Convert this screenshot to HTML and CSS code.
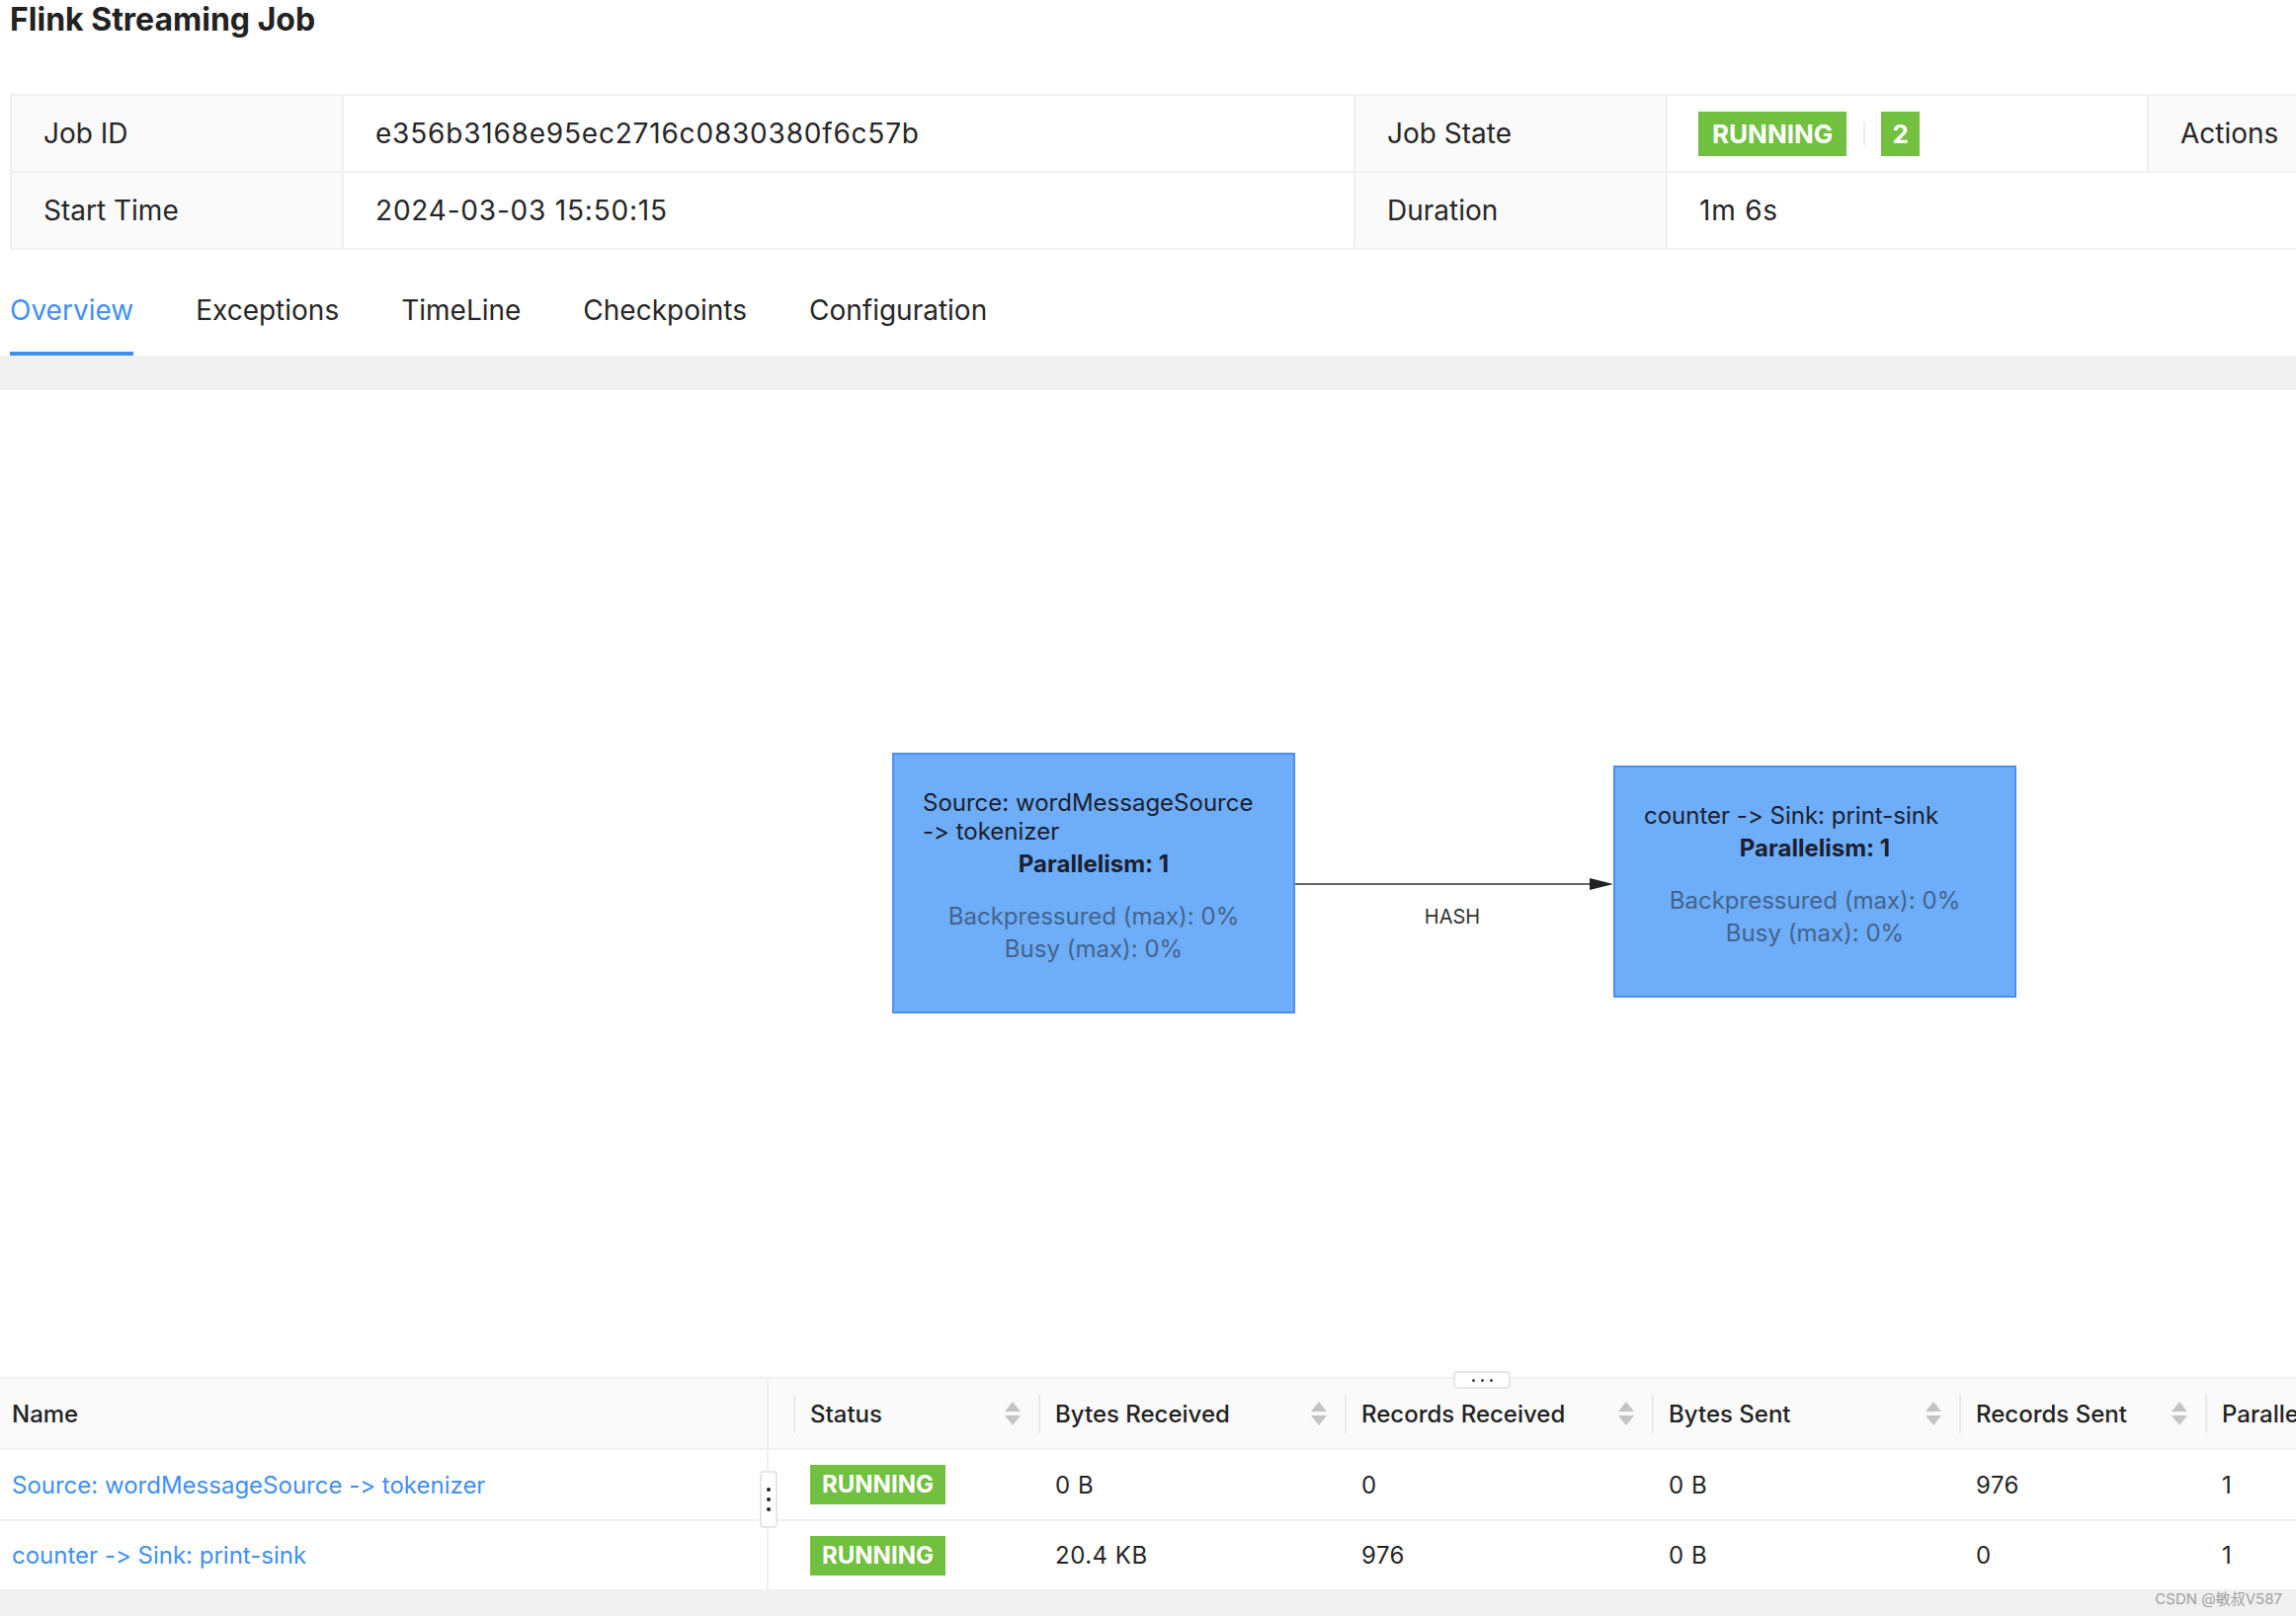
FILE: index.html
```html
<!DOCTYPE html>
<html lang="en">
<head>
<meta charset="utf-8">
<title>Flink Streaming Job</title>
<link rel="stylesheet" href="styles.css">
</head>
<body>
<div class="page">
  <h1 class="title">Flink Streaming Job</h1>

  <div class="desc">
    <div class="cell label">Job ID</div>
    <div class="cell value">e356b3168e95ec2716c0830380f6c57b</div>
    <div class="cell label">Job State</div>
    <div class="cell value state">
      <span class="tag tag-lg">RUNNING</span>
      <span class="vdiv"></span>
      <span class="tag tag-lg tag-num">2</span>
    </div>
    <div class="cell label">Actions</div>

    <div class="cell label">Start Time</div>
    <div class="cell value">2024-03-03 15:50:15</div>
    <div class="cell label">Duration</div>
    <div class="cell value span2">1m 6s</div>
  </div>

  <nav class="tabs">
    <span class="tab active">Overview</span>
    <span class="tab">Exceptions</span>
    <span class="tab">TimeLine</span>
    <span class="tab">Checkpoints</span>
    <span class="tab">Configuration</span>
  </nav>
  <div class="band"></div>

  <div class="graph">
    <svg class="edges" width="2324" height="999" viewBox="0 0 2324 999">
      <line x1="1311" y1="500" x2="1612" y2="500" stroke="#666" stroke-width="2"/>
      <path d="M1609 494 L1633 500 L1609 506 Z" fill="#222"/>
    </svg>
    <div class="node n1">
      <div class="node-name">Source: wordMessageSource -&gt; tokenizer</div>
      <div class="node-par">Parallelism: 1</div>
      <div class="node-metrics">
        <div>Backpressured (max): 0%</div>
        <div>Busy (max): 0%</div>
      </div>
    </div>
    <div class="node n2">
      <div class="node-name">counter -&gt; Sink: print-sink</div>
      <div class="node-par">Parallelism: 1</div>
      <div class="node-metrics">
        <div>Backpressured (max): 0%</div>
        <div>Busy (max): 0%</div>
      </div>
    </div>
    <div class="edge-label">HASH</div>
  </div>

  <div class="tbl">
    <div class="split-handle"><i></i><i></i><i></i></div>
    <div class="row head">
      <div class="c c-name">Name</div>
      <div class="c c-gap"></div>
      <div class="c th">Status<svg class="sorter" width="16" height="24" viewBox="0 0 16 24"><path d="M8 0 L16 10 L0 10 Z M0 14 L16 14 L8 24 Z" fill="#c4c4c4"/></svg></div>
      <div class="c th">Bytes Received<svg class="sorter" width="16" height="24" viewBox="0 0 16 24"><path d="M8 0 L16 10 L0 10 Z M0 14 L16 14 L8 24 Z" fill="#c4c4c4"/></svg></div>
      <div class="c th">Records Received<svg class="sorter" width="16" height="24" viewBox="0 0 16 24"><path d="M8 0 L16 10 L0 10 Z M0 14 L16 14 L8 24 Z" fill="#c4c4c4"/></svg></div>
      <div class="c th">Bytes Sent<svg class="sorter" width="16" height="24" viewBox="0 0 16 24"><path d="M8 0 L16 10 L0 10 Z M0 14 L16 14 L8 24 Z" fill="#c4c4c4"/></svg></div>
      <div class="c th">Records Sent<svg class="sorter" width="16" height="24" viewBox="0 0 16 24"><path d="M8 0 L16 10 L0 10 Z M0 14 L16 14 L8 24 Z" fill="#c4c4c4"/></svg></div>
      <div class="c th">Parallelism</div>
    </div>
    <div class="row">
      <div class="c c-name"><a class="link">Source: wordMessageSource -&gt; tokenizer</a></div>
      <div class="c c-gap"></div>
      <div class="c td"><span class="tag tag-sm">RUNNING</span></div>
      <div class="c td">0 B</div>
      <div class="c td">0</div>
      <div class="c td">0 B</div>
      <div class="c td">976</div>
      <div class="c td">1</div>
    </div>
    <div class="row last">
      <div class="c c-name"><a class="link">counter -&gt; Sink: print-sink</a></div>
      <div class="c c-gap"></div>
      <div class="c td"><span class="tag tag-sm">RUNNING</span></div>
      <div class="c td">20.4 KB</div>
      <div class="c td">976</div>
      <div class="c td">0 B</div>
      <div class="c td">0</div>
      <div class="c td">1</div>
    </div>
    <div class="col-resizer"><i></i><i></i><i></i></div>
  </div>

  <div class="foot"><span class="watermark">CSDN @敏叔V587</span></div>
</div>
</body>
</html>
```

FILE: styles.css
```css
* { box-sizing: border-box; }
html, body { margin: 0; padding: 0; }
body {
  width: 2324px;
  height: 1636px;
  overflow: hidden;
  background: #fff;
  font-family: Inter, "Noto Sans CJK SC", sans-serif;
  font-size: 28px;
  color: #262626;
  font-variant-ligatures: no-contextual no-common-ligatures;
  font-feature-settings: "calt" 0, "liga" 0;
}
.page {
  width: 2324px;
  height: 1636px;
  overflow: hidden;
  display: flex;
  flex-direction: column;
}
.title {
  margin: 0;
  padding-left: 10px;
  font-size: 32px;
  line-height: 39px;
  font-weight: 700;
  color: #222;
  flex: none;
}

/* descriptions */
.desc {
  flex: none;
  margin: 56px 0 0 10px;
  width: 2420px;
  display: grid;
  grid-template-columns: 334px 1022px 314px 485px 1fr;
  grid-auto-rows: 76px;
  gap: 2px;
  padding: 2px;
  background: #f0f0f0;
}
.cell {
  display: flex;
  align-items: center;
  padding: 0 32px;
  background: #fff;
  white-space: nowrap;
  line-height: 44px;
}
.label { background: #fafafa; }
.value { letter-spacing: 0.8px; }
.span2 { grid-column: span 2; }
.state { padding-left: 31px; letter-spacing: 0; }
.vdiv {
  width: 2px;
  height: 24px;
  background: #ececec;
  margin: 0 16px 0 17px;
}
.tag {
  display: inline-block;
  background: #72c03f;
  color: #fff;
  font-weight: 700;
  white-space: nowrap;
  letter-spacing: 0;
}
.tag-lg {
  height: 45px;
  line-height: 45px;
  font-size: 26px;
  padding: 0 14px;
}
.tag-num { padding: 0 11px; }
.tag-sm {
  height: 40px;
  line-height: 40px;
  font-size: 24px;
  padding: 0 12px;
}

/* tabs */
.tabs {
  flex: none;
  display: flex;
  gap: 63px;
  margin-top: 15px;
  padding-left: 10px;
}
.tab {
  position: relative;
  padding: 24px 0;
  line-height: 44px;
  color: #262626;
}
.tab.active { color: #408ff5; }
.tab.active::after {
  content: "";
  position: absolute;
  left: 0;
  right: 0;
  bottom: 0;
  height: 4px;
  background: #408ff5;
}
.band {
  flex: none;
  height: 35px;
  background: #f1f1f1;
}

/* graph */
.graph {
  flex: none;
  position: relative;
  height: 999px;
  background: #fff;
}
.edges { position: absolute; left: 0; top: 0; }
.node {
  position: absolute;
  width: 408px;
  background: #6eadf7;
  border: 2px solid #4a8ff0;
  padding: 34px 29px 47px;
  font-size: 24px;
  color: #1b2030;
}
.n1 { left: 903px; top: 367px; }
.n2 { left: 1633px; top: 380px; }
.node-name { line-height: 29px; }
.node-par {
  margin-top: 4px;
  text-align: center;
  font-weight: 700;
  line-height: 29px;
}
.node-metrics {
  margin-top: 22px;
  text-align: center;
  line-height: 33px;
  color: #42648c;
}
.edge-label {
  position: absolute;
  left: 1420px;
  top: 523px;
  width: 100px;
  text-align: center;
  font-size: 20px;
  line-height: 20px;
  color: #333;
}

/* table */
.tbl {
  flex: none;
  position: relative;
  border-top: 2px solid #f0f0f0;
  font-size: 24px;
}
.row {
  display: grid;
  grid-template-columns: 778px 25px 248px 310px 311px 311px 249px 300px;
  width: 2532px;
  height: 72px;
  border-bottom: 2px solid #f0f0f0;
}
.row.last { height: 69px; border-bottom: none; }
.row.head { background: #fafafa; }
.c {
  display: flex;
  align-items: center;
  white-space: nowrap;
  position: relative;
}
.c-name {
  padding-left: 12px;
  border-right: 2px solid #f0f0f0;
}
.head .c { font-weight: 500; color: #222; }
.th {
  justify-content: space-between;
  padding: 0 18px 0 17px;
}
.th::before {
  content: "";
  position: absolute;
  left: 0;
  top: 16px;
  width: 2px;
  height: 39px;
  background: #e9e9e9;
}
.sorter { flex: none; }
.td { padding-left: 17px; letter-spacing: 0.5px; }
.td .tag { letter-spacing: 0; }
.link { color: #408ff5; text-decoration: none; }

.split-handle {
  position: absolute;
  left: 1471px;
  top: -8px;
  width: 58px;
  height: 18px;
  background: #fff;
  border: 2px solid #e6e6e6;
  border-radius: 4px;
  display: flex;
  justify-content: center;
  align-items: center;
  gap: 6px;
  z-index: 2;
}
.split-handle i,
.col-resizer i {
  display: block;
  width: 3px;
  height: 3px;
  border-radius: 50%;
  background: #444;
}
.col-resizer {
  position: absolute;
  left: 769px;
  top: 93px;
  width: 18px;
  height: 58px;
  background: #fff;
  border: 2px solid #e6e6e6;
  border-radius: 4px;
  display: flex;
  flex-direction: column;
  justify-content: center;
  align-items: center;
  gap: 6px;
  z-index: 2;
}
.col-resizer i { width: 4px; height: 4px; background: #222; }

.foot {
  flex: 1;
  position: relative;
  background: #f0f0f0;
}
.watermark {
  position: absolute;
  right: 14px;
  top: 0;
  font-size: 15px;
  line-height: 20px;
  color: #a0a0a0;
  white-space: nowrap;
}
```
